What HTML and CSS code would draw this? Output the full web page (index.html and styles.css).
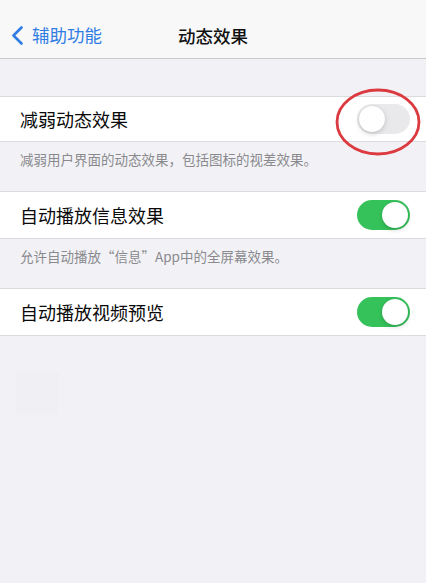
FILE: index.html
```html
<!DOCTYPE html>
<html lang="zh-CN">
<head>
<meta charset="utf-8">
<title>动态效果</title>
<link rel="stylesheet" href="styles.css">
</head>
<body>
<div class="page">
  <header class="nav">
    <div class="back">
      <svg class="chevron" width="13" height="19" viewBox="0 0 13 19"><path d="M10.5 1.5 L2.5 9.5 L10.5 17.5" fill="none" stroke="#2f7de3" stroke-width="2.6" stroke-linecap="round" stroke-linejoin="round"/></svg>
      <span class="back-label">辅助功能</span>
    </div>
    <div class="title">动态效果</div>
    <div></div>
  </header>

  <section class="group first">
    <div class="row row-short">
      <span class="label">减弱动态效果</span>
      <span class="switch off"><span class="knob"></span></span>
      <svg class="mark" width="86" height="68" viewBox="0 0 86 68"><ellipse cx="43" cy="34" rx="41" ry="32" fill="none" stroke="#db3a40" stroke-width="2.8"/></svg>
    </div>
  </section>
  <p class="note">减弱用户界面的动态效果，包括图标的视差效果。</p>

  <section class="group">
    <div class="row">
      <span class="label">自动播放信息效果</span>
      <span class="switch on"><span class="knob"></span></span>
    </div>
  </section>
  <p class="note">允许自动播放“信息”App中的全屏幕效果。</p>

  <section class="group">
    <div class="row">
      <span class="label">自动播放视频预览</span>
      <span class="switch on"><span class="knob"></span></span>
    </div>
  </section>

  <div class="ghost"></div>
</div>
</body>
</html>
```
FILE: styles.css
```css
* { box-sizing: border-box; }
html, body {
  margin: 0;
  padding: 0;
  background: #f2f2f6;
}
body {
  font-family: "Noto Sans CJK SC", "Noto Sans", "Liberation Sans", sans-serif;
  width: 426px;
  height: 583px;
  overflow: hidden;
}
.page {
  display: flex;
  flex-direction: column;
}
.nav {
  height: 59px;
  background: #f8f8f9;
  border-bottom: 1px solid #c9c9cc;
  display: grid;
  grid-template-columns: 1fr auto 1fr;
  align-items: center;
  padding-top: 12px;
}
.back {
  display: flex;
  align-items: center;
  padding-left: 11px;
  gap: 8px;
  color: #2f7de3;
  font-size: 17.5px;
}
.chevron { display: block; }
.back-label { line-height: 24px; }
.title {
  font-size: 17.5px;
  font-weight: 500;
  color: #111;
}
.group {
  background: #fff;
  border-top: 1px solid #dcdce0;
  border-bottom: 1px solid #dcdce0;
}
.group.first { margin-top: 37px; }
.row {
  position: relative;
  height: 46px;
  display: flex;
  align-items: center;
  justify-content: space-between;
  padding: 0 16px 0 20px;
}
.row-short { height: 44px; }
.label {
  font-size: 18px;
  color: #0a0a0a;
  line-height: 24px;
}
.switch {
  position: relative;
  width: 53px;
  height: 30px;
  border-radius: 15px;
  display: block;
}
.switch.off { background: #e9e9eb; }
.switch.on { background: #35c25a; }
.knob {
  position: absolute;
  top: 2px;
  width: 26px;
  height: 26px;
  border-radius: 50%;
  background: #fff;
  box-shadow: 0 2px 5px rgba(0,0,0,0.16), 0 0 1px rgba(0,0,0,0.12);
}
.switch.off .knob { left: 2px; }
.switch.on .knob { right: 2px; }
.mark {
  position: absolute;
  left: 335px;
  top: -9px;
}
.note {
  margin: 0;
  padding: 7px 20px 22px;
  font-size: 13.5px;
  line-height: 20px;
  color: #8a8a8e;
}
.ghost {
  margin: 36px 0 0 16px;
  width: 43px;
  height: 43px;
  background: #f0f0f4;
}
```
